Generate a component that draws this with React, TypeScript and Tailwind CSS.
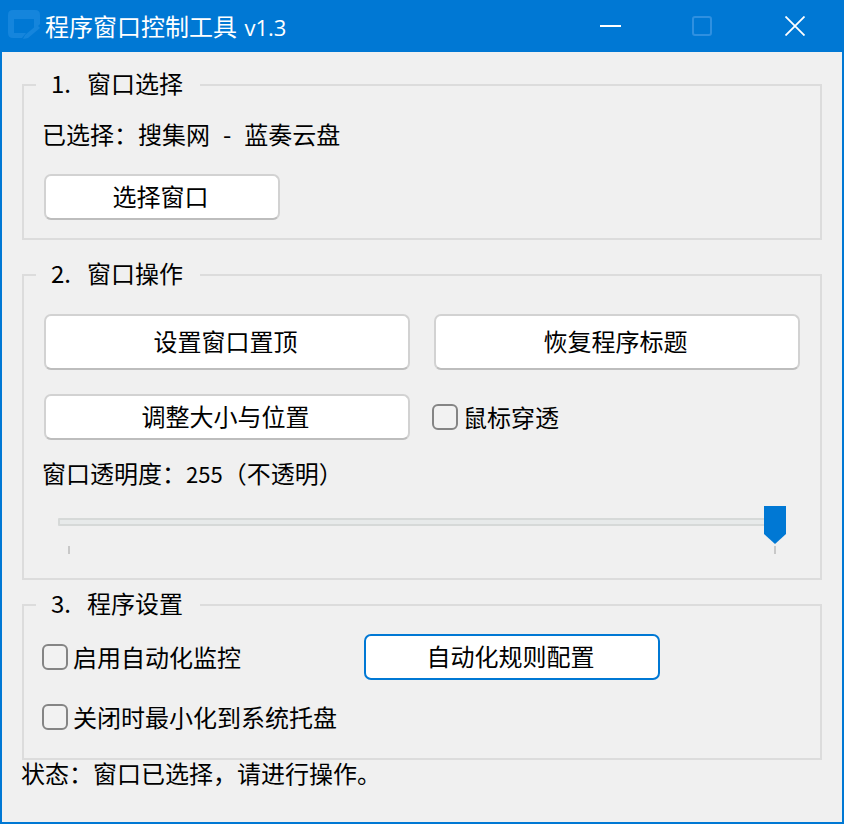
const font = { fontFamily: '"Noto Sans CJK SC", sans-serif' };

function Btn({ label, className }: { label: string; className: string }) {
  return (
    <button className={`flex items-center justify-center rounded-[7px] border-2 border-[#d2d2d2] border-b-[#bdbdbd] bg-white pr-[3px] pb-[3px] text-[24px] leading-none text-black ${className}`}>
      {label}
    </button>
  );
}

function Check({ label, className = "" }: { label: string; className?: string }) {
  return (
    <label className={`flex items-center gap-[5px] text-[24px] leading-none text-black ${className}`}>
      <span className="h-[26px] w-[26px] rounded-[6px] border-2 border-[#858585] bg-[#f2f2f2]" />
      <span className="pb-[1px]">{label}</span>
    </label>
  );
}

function Group({ title, className, children }: { title: string; className: string; children: React.ReactNode }) {
  return (
    <section className={`relative ml-[20px] w-[800px] border-2 border-[#dcdcdc] ${className}`}>
      <h2 className="absolute top-[-16px] left-[12px] flex h-[26px] items-center bg-[#f0f0f0] pr-[17px] pl-[15px] text-[24px] leading-none font-normal text-black">
        <span className="w-[36px]">{title.split(" ")[0]}</span>
        <span>{title.split(" ")[1]}</span>
      </h2>
      {children}
    </section>
  );
}

export default function App() {
  return (
    <div style={font} className="flex h-[824px] w-[844px] flex-col overflow-hidden border-r-2 border-b-2 border-l-2 border-[#0078d4] bg-[#f0f0f0]">
      <header className="-mx-[2px] flex h-[52px] shrink-0 items-center bg-[#0078d4] text-white">
        <svg className="mt-[-4px] ml-[8px] shrink-0" width="32" height="29" viewBox="0 0 32 29" fill="none">
          <path fillRule="evenodd" d="M0 5q0-5 5-5h22q5 0 5 5v9l-6 6V9H6v14h12l-4 5H5q-5 0-5-5z" fill="#1585dc" />
          <path d="M29 15l3 3-12 10-5 1 2-4z" fill="#1585dc" />
        </svg>
        <h1 className="ml-[5px] text-[24px] leading-none font-normal whitespace-nowrap">
          程序窗口控制工具 <span className="ml-[2px] text-[22px]" style={{ fontFamily: '"Open Sans", sans-serif' }}>v1.3</span>
        </h1>
        <svg className="ml-auto" width="21" height="2" viewBox="0 0 21 2"><rect width="21" height="2" fill="#ffffff" /></svg>
        <svg className="ml-[71px]" width="20" height="20" viewBox="0 0 20 20" fill="none"><rect x="1" y="1" width="18" height="18" rx="2" stroke="#2f90e0" strokeWidth="2" /></svg>
        <svg className="mr-[39px] ml-[73px]" width="20" height="20" viewBox="0 0 20 20" fill="none"><path d="M0.5 0.5l19 19M19.5 0.5l-19 19" stroke="#ffffff" strokeWidth="1.8" /></svg>
      </header>

      <Group title="1. 窗口选择" className="mt-[32px] h-[156px] shrink-0 pt-[32px] pl-[18px]">
        <p className="flex h-[32px] items-center text-[24px] leading-[32px] whitespace-pre text-black">
          已选择：搜集网<span className="mx-[13px]">-</span>蓝奏云盘
        </p>
        <Btn label="选择窗口" className="mt-[24px] ml-[2px] h-[46px] w-[236px]" />
      </Group>

      <Group title="2. 窗口操作" className="mt-[34px] h-[306px] shrink-0 pt-[38px] pl-[18px]">
        <div className="ml-[2px] flex gap-[24px]">
          <Btn label="设置窗口置顶" className="h-[56px] w-[366px]" />
          <Btn label="恢复程序标题" className="h-[56px] w-[366px]" />
        </div>
        <div className="mt-[24px] ml-[2px] flex items-center gap-[22px]">
          <Btn label="调整大小与位置" className="h-[46px] w-[366px]" />
          <Check label="鼠标穿透" />
        </div>
        <p className="mt-[17px] h-[32px] text-[24px] leading-[32px] whitespace-pre text-black">窗口透明度：<span className="text-[22px]">255</span>（不透明）</p>
        <div className="relative mt-[17px] h-[48px] w-[744px]">
          <div className="absolute top-[12px] left-[16px] h-[8px] w-[708px] rounded-[1px] border-2 border-[#d6d9d8] bg-[#e7eaea]" />
          <svg className="absolute top-0 left-[722px]" width="22" height="38" viewBox="0 0 22 38"><path d="M0 0h22v28l-11 10L0 28z" fill="#0078d4" /></svg>
          <div className="absolute top-[40px] left-[26px] h-[8px] w-[2px] bg-[#c8c8c8]" />
          <div className="absolute top-[40px] left-[732px] h-[8px] w-[2px] bg-[#c8c8c8]" />
        </div>
      </Group>

      <Group title="3. 程序设置" className="mt-[24px] h-[156px] shrink-0 pt-[28px] pl-[18px]">
        <div className="flex items-center">
          <Check label="启用自动化监控" className="w-[322px]" />
          <button className="flex h-[46px] w-[296px] items-center justify-center rounded-[7px] border-2 border-[#0078d4] bg-white pr-[3px] pb-[3px] text-[24px] leading-none text-black">自动化规则配置</button>
        </div>
        <Check label="关闭时最小化到系统托盘" className="mt-[24px]" />
      </Group>

      <p className="-mt-[3px] h-[32px] pl-[19px] text-[24px] leading-[32px] text-black">状态：窗口已选择，请进行操作。</p>
    </div>
  );
}
